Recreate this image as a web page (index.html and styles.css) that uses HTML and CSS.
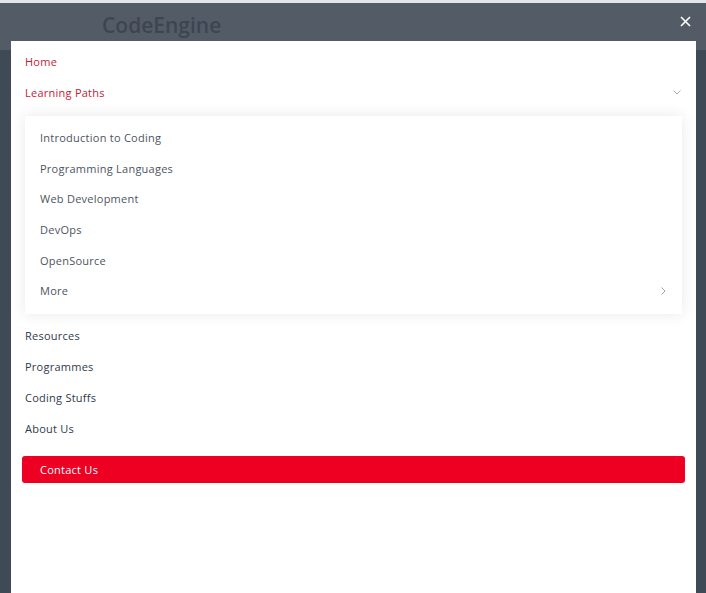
FILE: index.html
```html
<!DOCTYPE html>
<html lang="en">
<head>
    <meta charset="UTF-8">
    <meta name="viewport" content="width=device-width, initial-scale=1.0">
    <title>CodeEngine</title>
    <link rel="stylesheet" href="styles.css">
</head>
<body>
<div class="topStrip"></div>
<div class="siteHeader">
    <span class="logo">CodeEngine</span>
</div>

<button class="closeButton" aria-label="Close">
    <svg width="11" height="11" viewBox="0 0 11 11">
        <path d="M1 1 L10 10 M10 1 L1 10" stroke="#fff" stroke-width="1.6" fill="none"/>
    </svg>
</button>

<div class="mobileMenu">
    <a class="menuLink active" href="#">Home</a>
    <a class="menuLink active hasSub" href="#">
        <span>Learning Paths</span>
        <svg class="chevron" width="8" height="5" viewBox="0 0 8 5">
            <path d="M0.5 0.5 L4 4 L7.5 0.5" stroke="#b7a3aa" stroke-width="1" fill="none"/>
        </svg>
    </a>
    <div class="subMenu">
        <a class="subLink" href="#">Introduction to Coding</a>
        <a class="subLink" href="#">Programming Languages</a>
        <a class="subLink" href="#">Web Development</a>
        <a class="subLink" href="#">DevOps</a>
        <a class="subLink" href="#">OpenSource</a>
        <a class="subLink hasSub" href="#">
            <span>More</span>
            <svg class="chevron" width="5" height="8" viewBox="0 0 5 8">
                <path d="M0.5 0.5 L4 4 L0.5 7.5" stroke="#9aa1aa" stroke-width="1" fill="none"/>
            </svg>
        </a>
    </div>
    <a class="menuLink" href="#">Resources</a>
    <a class="menuLink" href="#">Programmes</a>
    <a class="menuLink" href="#">Coding Stuffs</a>
    <a class="menuLink" href="#">About Us</a>
    <a class="contactButton" href="#">Contact Us</a>
</div>
</body>
</html>
```

FILE: styles.css
```css
body {
    margin: 0;
    padding: 0;
    background-color: #3f4a57;
    font-family: "Open Sans", Arial, sans-serif;
    height: 593px;
    overflow: hidden;
}
.topStrip {
    height: 3px;
    background-color: #e4e5ea;
}
.siteHeader {
    height: 47px;
    background-color: #535c66;
    padding-left: 102px;
    box-sizing: border-box;
}
.logo {
    display: block;
    padding-top: 8px;
    font-size: 21px;
    font-weight: 600;
    color: #3d4550;
}
.closeButton {
    position: absolute;
    top: 15px;
    right: 15px;
    background: none;
    border: none;
    padding: 0;
    cursor: pointer;
}
.mobileMenu {
    position: absolute;
    top: 41px;
    left: 11px;
    right: 10px;
    bottom: 0;
    background-color: #fff;
    padding: 5px 11px 0 11px;
    display: flex;
    flex-direction: column;
}
.menuLink {
    display: flex;
    justify-content: space-between;
    align-items: center;
    height: 31px;
    padding: 0 3px;
    font-size: 11px;
    font-weight: 500;
    letter-spacing: 0.25px;
    color: #2f3a4a;
    text-decoration: none;
}
.menuLink.active {
    color: #cc1733;
    font-weight: 400;
}
.hasSub .chevron {
    margin-right: 1px;
}
.subMenu {
    display: flex;
    flex-direction: column;
    margin: 8px 3px 6px 3px;
    padding: 6px 0 8px 0;
    background-color: #fff;
    box-shadow: 0 0 14px rgba(30, 40, 60, 0.1);
}
.subLink {
    display: flex;
    justify-content: space-between;
    align-items: center;
    height: 30.7px;
    padding: 0 15px;
    font-size: 11px;
    letter-spacing: 0.25px;
    color: #4d5561;
    text-decoration: none;
}
.contactButton {
    display: block;
    margin: 12px 0 0 0;
    height: 27px;
    line-height: 27px;
    padding: 0 18px;
    background-color: #ee0022;
    border-radius: 3px;
    color: #fff;
    font-size: 11px;
    font-weight: 500;
    letter-spacing: 0.25px;
    text-decoration: none;
}
```
